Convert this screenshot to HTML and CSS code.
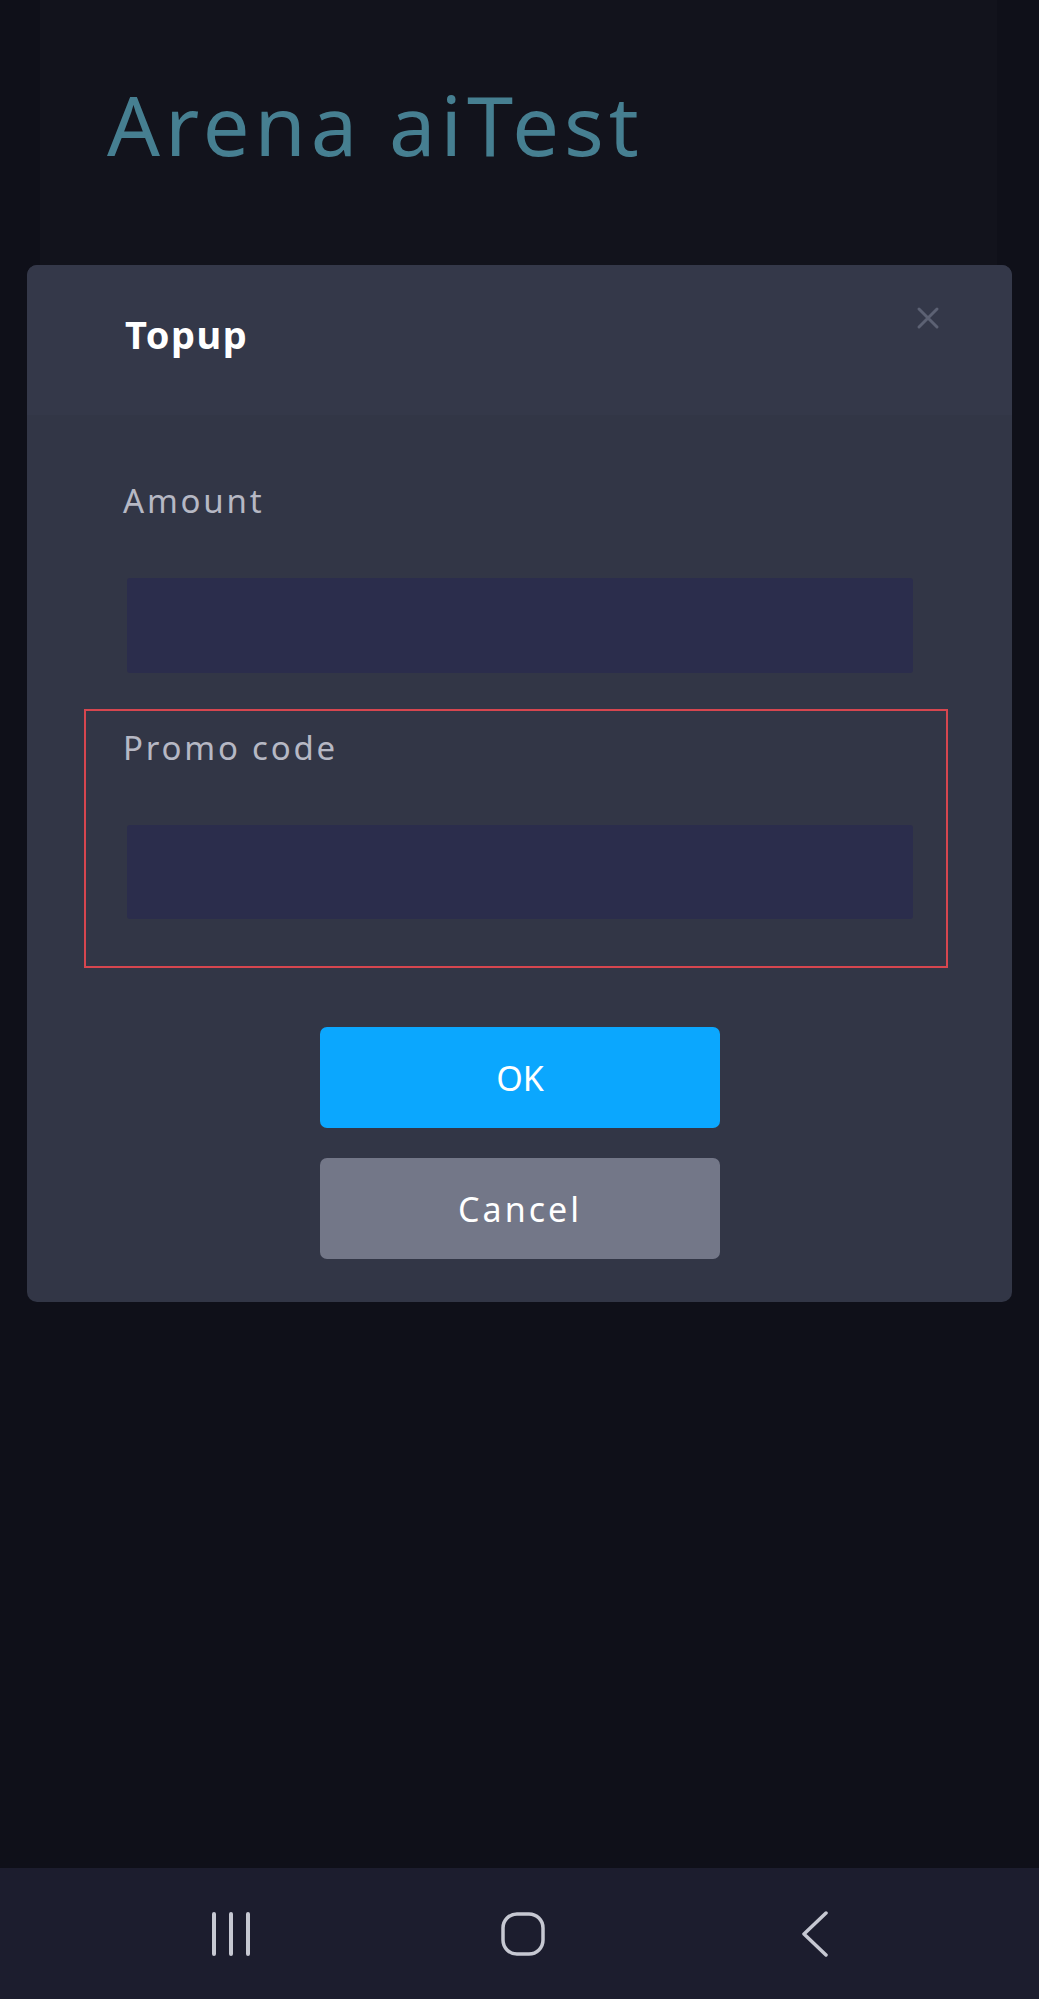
FILE: index.html
```html
<!DOCTYPE html>
<html lang="en">
 <head>
  <meta charset="utf-8">
  <title>Arena aiTest - Topup</title>
  <meta name="viewport" content="width=device-width, initial-scale=1">
  <link rel="stylesheet" href="styles.css">
 </head>
 <body>
  <div class="screen">

   <div class="page">
    <div class="panel">
     <h1 class="brand">Arena aiTest</h1>
    </div>
   </div>

   <!-- topup dialog, drawn over the page -->
   <div class="modal">
    <div class="modal-head">
     <h2 class="modal-title">Topup</h2>
     <svg class="close" width="24" height="24" viewBox="0 0 24 24">
      <path d="M3 3 L21 21 M21 3 L3 21" stroke="#5c6173" stroke-width="3" stroke-linecap="round" fill="none"/>
     </svg>
    </div>
    <div class="modal-body">
     <div class="field">
      <label class="label">Amount</label>
      <div class="input"></div>
     </div>
     <div class="field marked">
      <label class="label">Promo code</label>
      <div class="input"></div>
     </div>
     <div class="actions">
      <button class="btn ok">OK</button>
      <button class="btn cancel">Cancel</button>
     </div>
    </div>
   </div>

   <div class="navbar">
    <span class="navkey">
     <svg width="40" height="44" viewBox="0 0 40 44">
      <path d="M3 2 V42 M20 2 V42 M37 2 V42" stroke="#c6c8d2" stroke-width="4" stroke-linecap="round" fill="none"/>
     </svg>
    </span>
    <span class="navkey">
     <svg width="44" height="44" viewBox="0 0 44 44">
      <rect x="2" y="2" width="40" height="40" rx="14" ry="14" stroke="#c6c8d2" stroke-width="3.5" fill="none"/>
     </svg>
    </span>
    <span class="navkey">
     <svg width="30" height="46" viewBox="0 0 30 46">
      <path d="M26 2 L4 23 L26 44" stroke="#c6c8d2" stroke-width="3.5" stroke-linecap="round" stroke-linejoin="round" fill="none"/>
     </svg>
    </span>
   </div>

  </div>
 </body>
</html>
```

FILE: styles.css
```css
* { box-sizing: border-box; }
BODY { margin: 0; background: #0f1019; font-family: "Noto Sans", "DejaVu Sans", sans-serif; }

.screen { position: relative; height: 1999px; display: flex; flex-direction: column; }

.page { flex: 1; }
.panel { margin: 0 42px 0 40px; height: 420px; background: #12131c; padding-left: 67px; padding-top: 1px; }
.brand { margin: 81px 0 0; font-size: 83px; line-height: 1; font-weight: 400; color: #467f91; letter-spacing: 5px; }

.modal { position: absolute; top: 265px; left: 27px; right: 27px; height: 1037px;
         background: #323646; border-radius: 10px; }
.modal-head { height: 150px; padding: 0 72px 0 98px; display: flex; justify-content: space-between;
              align-items: flex-start; background: #343849; border-radius: 10px 10px 0 0; }
.modal-title { margin: 50px 0 0; font-size: 38px; line-height: 1; font-weight: 700; color: #ffffff; letter-spacing: 1.5px; }
.close { margin-top: 41px; }

.modal-body { padding: 69px 99px 0 100px; }
.label { display: block; margin-left: -4px; font-size: 33px; line-height: 1; color: #b6b8c4; letter-spacing: 2.8px; }
.input { margin-top: 61px; height: 95px; background: #2b2d4c; border-radius: 3px; }

.marked { margin: 36px -35px 0 -43px; border: 2px solid #d6464f; padding: 20px 33px 47px 41px; }
.marked .input { margin-top: 61px; height: 94px; }

.actions { margin-top: 59px; display: flex; flex-direction: column; align-items: center; gap: 30px; }
.btn { width: 400px; height: 101px; border: 0; border-radius: 7px; color: #ffffff;
       font-family: "Noto Sans", "DejaVu Sans", sans-serif; font-size: 34px; letter-spacing: 3px; }
.btn.ok { background: #0ba7fe; letter-spacing: 0; }
.btn.cancel { background: #737788; }

.navbar { height: 131px; background: #1c1d2e; display: flex; justify-content: center;
          align-items: center; gap: 232px; padding-left: 6px; }
.navkey { width: 60px; display: flex; justify-content: center; }
```
